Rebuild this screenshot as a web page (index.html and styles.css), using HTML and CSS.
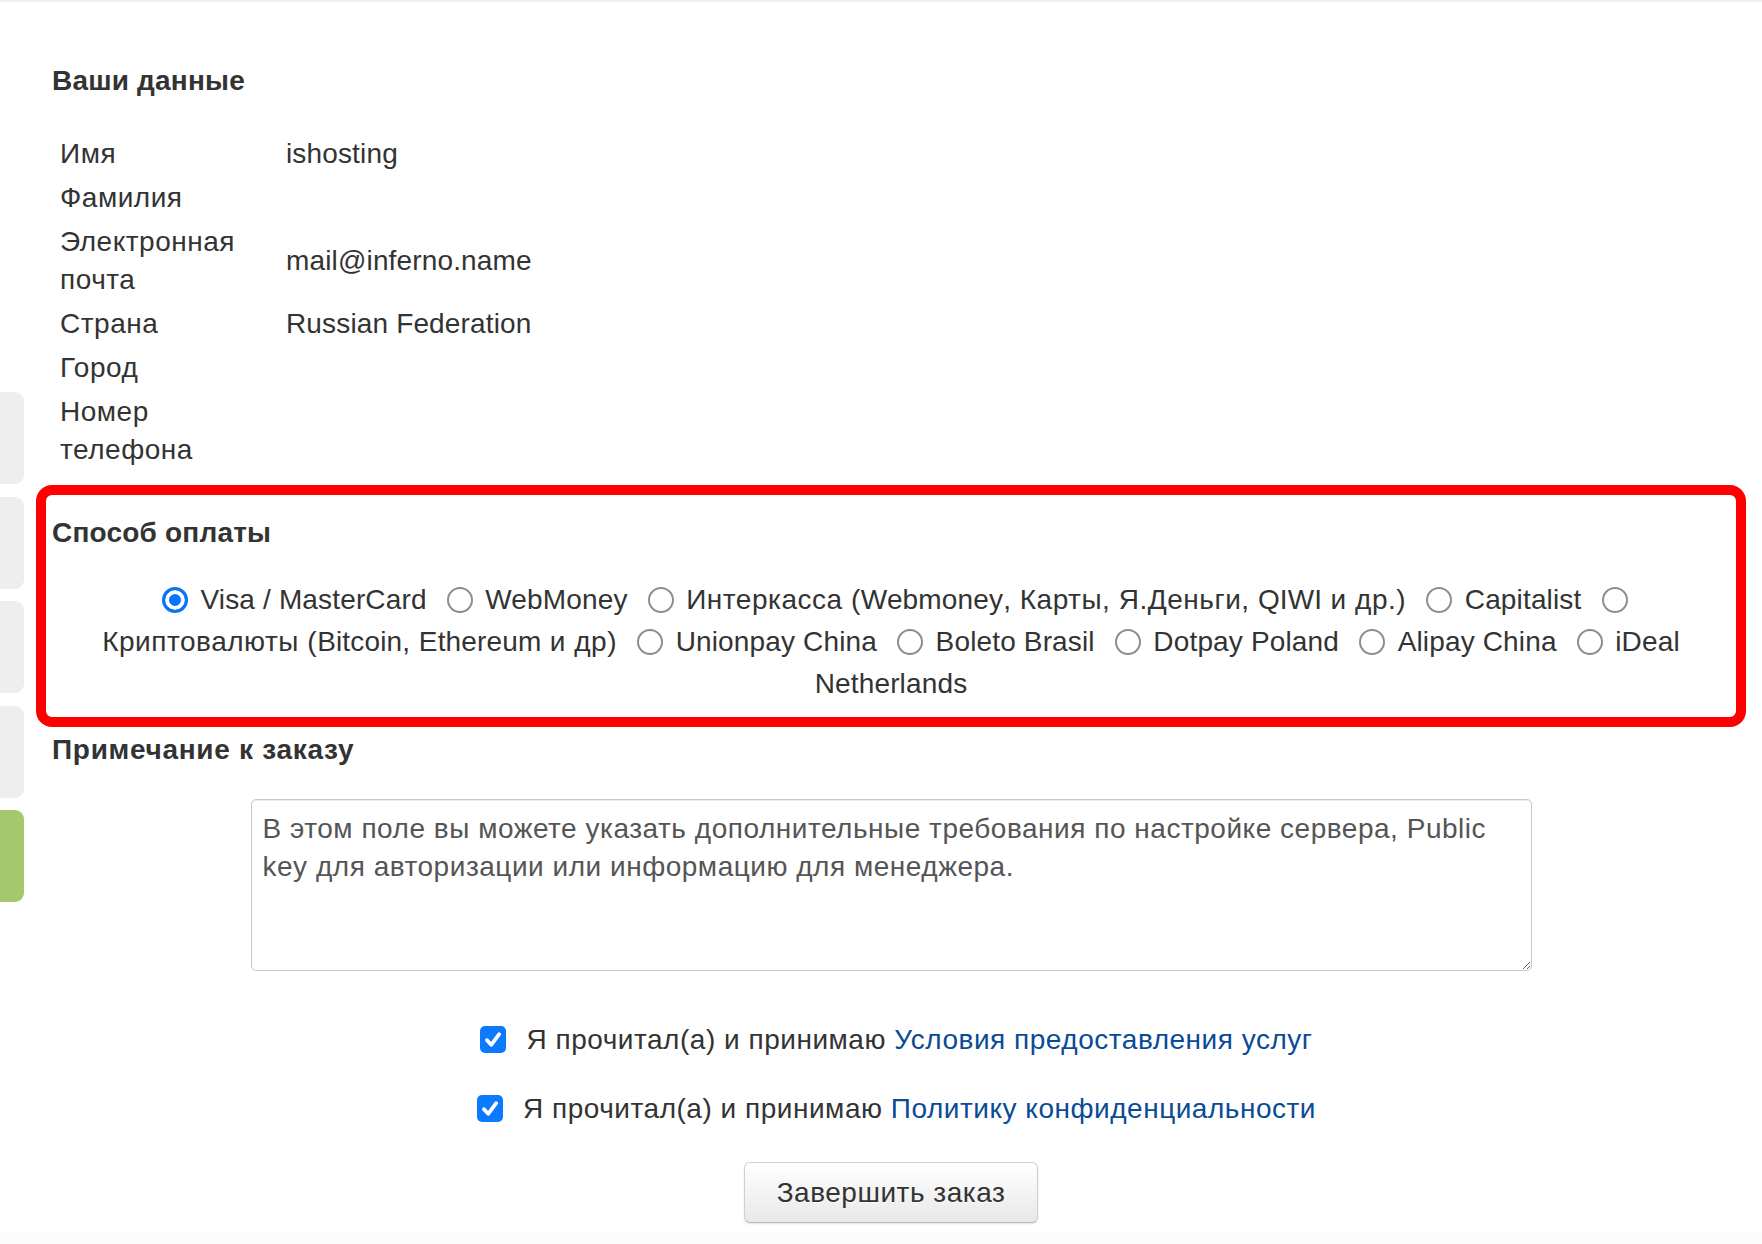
FILE: index.html
```html
<!DOCTYPE html>
<html lang="ru">
<head>
<meta charset="utf-8">
<title>Оформление заказа</title>
<link rel="stylesheet" href="styles.css">
</head>
<body>
<div class="topline"></div>
<div class="layout">
  <aside class="side">
    <div class="tab"></div>
    <div class="tab"></div>
    <div class="tab"></div>
    <div class="tab"></div>
    <div class="tab tab-green"></div>
  </aside>
  <main class="main">
    <h2 class="title first">Ваши данные</h2>
    <table class="info">
      <tr><td class="lbl">Имя</td><td class="val lat">ishosting</td></tr>
      <tr><td class="lbl">Фамилия</td><td class="val"></td></tr>
      <tr><td class="lbl">Электронная почта</td><td class="val lat">mail@inferno.name</td></tr>
      <tr><td class="lbl">Страна</td><td class="val lat">Russian Federation</td></tr>
      <tr><td class="lbl">Город</td><td class="val"></td></tr>
      <tr><td class="lbl">Номер телефона</td><td class="val"></td></tr>
    </table>

    <section class="pay">
      <h2 class="title">Способ оплаты</h2>
      <div class="pay-options">
        <label class="opt"><input class="radio" type="radio" name="pay" checked> <span class="lat">Visa / MasterCard</span></label>
        <label class="opt"><input class="radio" type="radio" name="pay"> <span class="lat">WebMoney</span></label>
        <label class="opt"><input class="radio" type="radio" name="pay"> Интеркасса (<span class="lat">Webmoney</span>, Карты, Я.Деньги, <span class="lat">QIWI</span> и др.)</label>
        <label class="opt"><input class="radio" type="radio" name="pay"> <span class="lat">Capitalist</span></label>
        <label class="opt"><input class="radio" type="radio" name="pay"> Криптовалюты (<span class="lat">Bitcoin</span>, <span class="lat">Ethereum</span> и др)</label>
        <label class="opt"><input class="radio" type="radio" name="pay"> <span class="lat">Unionpay China</span></label>
        <label class="opt"><input class="radio" type="radio" name="pay"> <span class="lat">Boleto Brasil</span></label>
        <label class="opt"><input class="radio" type="radio" name="pay"> <span class="lat">Dotpay Poland</span></label>
        <label class="opt"><input class="radio" type="radio" name="pay"> <span class="lat">Alipay China</span></label>
        <label class="opt"><input class="radio" type="radio" name="pay"> <span class="lat">iDeal Netherlands</span></label>
      </div>
    </section>

    <h2 class="title note-title">Примечание к заказу</h2>
    <textarea class="note" rows="4" placeholder="В этом поле вы можете указать дополнительные требования по настройке сервера, Public key для авторизации или информацию для менеджера."></textarea>

    <div class="agree agree-1">
      <span class="cb"><svg width="26" height="27" viewBox="0 0 26 27"><path d="M7 14.2 L11.2 18.8 L19.2 8.2" fill="none" stroke="#fff" stroke-width="3.8" stroke-linecap="round" stroke-linejoin="round"/></svg></span><span class="agree-text">Я прочитал(а) и принимаю <a href="#">Условия предоставления услуг</a></span>
    </div>
    <div class="agree agree-2">
      <span class="cb"><svg width="26" height="27" viewBox="0 0 26 27"><path d="M7 14.2 L11.2 18.8 L19.2 8.2" fill="none" stroke="#fff" stroke-width="3.8" stroke-linecap="round" stroke-linejoin="round"/></svg></span><span class="agree-text">Я прочитал(а) и принимаю <a href="#">Политику конфиденциальности</a></span>
    </div>

    <div class="actions">
      <button class="btn" type="button">Завершить заказ</button>
    </div>
  </main>
</div>
<div class="footer"></div>
</body>
</html>
```

FILE: styles.css
```css
html, body {
  margin: 0;
  padding: 0;
  background: #fff;
}

body {
  font-family: "Liberation Sans", Arial, Helvetica, sans-serif;
  font-size: 28px;
  line-height: 38px;
  letter-spacing: 0.52px;
  color: #333;
}

.lat {
  letter-spacing: 0.15px;
}

.topline {
  height: 2px;
  background: #f0f0f0;
}

.layout {
  display: flex;
  align-items: flex-start;
}

.side {
  width: 24px;
  flex-shrink: 0;
  padding-top: 390px;
  display: flex;
  flex-direction: column;
  gap: 12.5px;
}

.tab {
  height: 92px;
  background: #eeeeee;
  border-radius: 0 9px 9px 0;
}

.tab-green {
  background: #a4c86c;
}

.main {
  flex: 1;
  min-width: 0;
  padding: 0 32px 0 28px;
}

.title {
  margin: 0;
  font-size: 28px;
  line-height: 38px;
  font-weight: bold;
  letter-spacing: 0.2px;
  color: #333;
}

.title.first {
  margin-top: 60px;
}

.info {
  border-collapse: collapse;
  margin-top: 32px;
}

.info td {
  padding: 3px 8px;
  line-height: 38px;
  vertical-align: middle;
}

.info .lbl {
  width: 210px;
}

.pay {
  margin: 13px -16px 0;
  border: 10px solid #ff0000;
  border-radius: 16px;
  padding: 19px 6px 12px;
}

.pay-options {
  width: 1600px;
  margin: 27px auto 0;
  text-align: center;
  line-height: 42px;
}

.opt {
  color: #333;
}

.radio {
  -webkit-appearance: none;
  appearance: none;
  display: inline-block;
  box-sizing: border-box;
  width: 26px;
  height: 26px;
  margin: 0 4px 0 12px;
  border: 2px solid #8d8d8d;
  border-radius: 50%;
  background: #fff;
  vertical-align: middle;
  position: relative;
  top: -2px;
}

.radio:checked {
  border: 3px solid #0a74f7;
  background: #0a74f7;
  box-shadow: inset 0 0 0 4px #fff;
}

.note-title {
  margin-top: 4px;
  letter-spacing: 0.7px;
}

.note {
  display: block;
  box-sizing: border-box;
  width: 1281px;
  height: 172px;
  margin: 30px auto 0;
  padding: 10px 11px;
  border: 1px solid #c8c8c8;
  border-radius: 5px;
  box-shadow: inset 0 1px 1px rgba(0, 0, 0, 0.075);
  font-family: "Liberation Sans", Arial, Helvetica, sans-serif;
  font-size: 28px;
  line-height: 38px;
  letter-spacing: 0.52px;
  color: #555;
  resize: both;
}

.note::placeholder {
  color: #555;
  opacity: 1;
}

.agree {
  text-align: center;
  line-height: 38px;
}

.agree-1 {
  margin-top: 50px;
}

.agree-2 {
  margin-top: 31px;
}

.cb {
  display: inline-block;
  width: 26px;
  height: 27px;
  margin: 0 20px 0 11px;
  background: #0b7afe;
  border-radius: 5px;
  vertical-align: middle;
  position: relative;
  top: -2px;
}

.cb svg {
  display: block;
}

.agree a {
  color: #0a4b96;
  text-decoration: none;
}

.actions {
  text-align: center;
  margin-top: 34px;
}

.btn {
  display: inline-block;
  font-family: "Liberation Sans", Arial, Helvetica, sans-serif;
  font-size: 28px;
  line-height: 37px;
  letter-spacing: 0.52px;
  padding: 11px 32px;
  color: #333;
  background: linear-gradient(to bottom, #ffffff, #e8e8e8);
  border: 1px solid #cfcfcf;
  border-bottom-color: #b8b8b8;
  border-radius: 6px;
  box-shadow: 0 1px 2px rgba(0, 0, 0, 0.12);
  text-shadow: 0 1px 1px rgba(255, 255, 255, 0.75);
  cursor: pointer;
}

.footer {
  margin-top: 10px;
  height: 20px;
  background: #fcfcfc;
}
```
